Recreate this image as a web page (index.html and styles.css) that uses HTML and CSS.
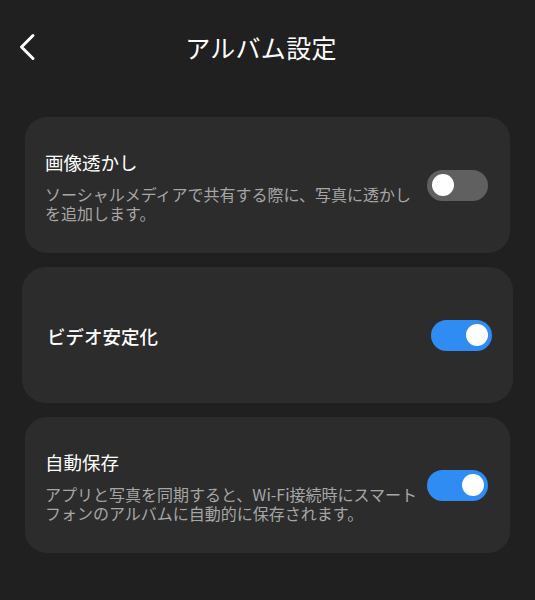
FILE: index.html
```html
<!DOCTYPE html>
<html lang="ja">
<head>
<meta charset="utf-8">
<link rel="stylesheet" href="styles.css">
</head>
<body>
<div class="screen">
  <header class="topbar">
    <div class="back">
      <svg width="18" height="28" viewBox="0 0 18 28"><polyline points="15,2.5 3.5,14 15,25.5" fill="none" stroke="#ffffff" stroke-width="3" stroke-linecap="round" stroke-linejoin="round"/></svg>
    </div>
    <h1 class="title">アルバム設定</h1>
    <div></div>
  </header>
  <main class="list">
    <section class="card">
      <div class="text">
        <div class="name">画像透かし</div>
        <div class="desc">ソーシャルメディアで共有する際に、写真に透かしを追加します。</div>
      </div>
      <div class="toggle off"><span class="knob"></span></div>
    </section>
    <section class="card wide">
      <div class="text">
        <div class="name strong">ビデオ安定化</div>
      </div>
      <div class="toggle on"><span class="knob"></span></div>
    </section>
    <section class="card">
      <div class="text">
        <div class="name">自動保存</div>
        <div class="desc">アプリと写真を同期すると、Wi-Fi接続時にスマートフォンのアルバムに自動的に保存されます。</div>
      </div>
      <div class="toggle on"><span class="knob"></span></div>
    </section>
  </main>
</div>
</body>
</html>
```
FILE: styles.css
```css
html, body {
  margin: 0;
  padding: 0;
  background: #202020;
}
body {
  font-family: "Noto Sans CJK JP", "Noto Sans", sans-serif;
  color: #ffffff;
  width: 535px;
  height: 600px;
  overflow: hidden;
}
.screen {
  display: flex;
  flex-direction: column;
}
.topbar {
  height: 94px;
  display: grid;
  grid-template-columns: 1fr auto 1fr;
  align-items: center;
}
.back {
  padding-left: 18px;
  display: flex;
  align-items: center;
  height: 28px;
}
.title {
  margin: 0 13px 0 0;
  font-size: 25px;
  font-weight: 400;
  line-height: 1;
  letter-spacing: 0.3px;
}
.list {
  padding-top: 23px;
  display: flex;
  flex-direction: column;
  gap: 14px;
}
.card {
  margin: 0 25px;
  height: 136px;
  box-sizing: border-box;
  background: #2c2c2c;
  border-radius: 22px;
  padding: 0 22px 0 20px;
  display: flex;
  align-items: center;
}
.card.wide {
  margin: 0 22px;
  padding: 0 21px 0 25px;
  border-radius: 24px;
}
.text {
  flex: 1;
  min-width: 0;
  display: flex;
  flex-direction: column;
  gap: 10px;
  padding-top: 2px;
}
.name {
  font-size: 18.5px;
  font-weight: 400;
  line-height: 26px;
}
.name.strong {
  font-weight: 500;
}
.desc {
  font-size: 16px;
  line-height: 19.5px;
  color: #a6a6a6;
}
.toggle {
  flex: none;
  width: 61px;
  height: 31px;
  border-radius: 16px;
  box-sizing: border-box;
  padding: 4px;
  display: flex;
  align-items: center;
}
.toggle.off {
  background: #606060;
  justify-content: flex-start;
  padding-left: 5px;
}
.toggle.on {
  background: #2f8cf3;
  justify-content: flex-end;
}
.knob {
  width: 22px;
  height: 22px;
  border-radius: 50%;
  background: #ffffff;
}
```
